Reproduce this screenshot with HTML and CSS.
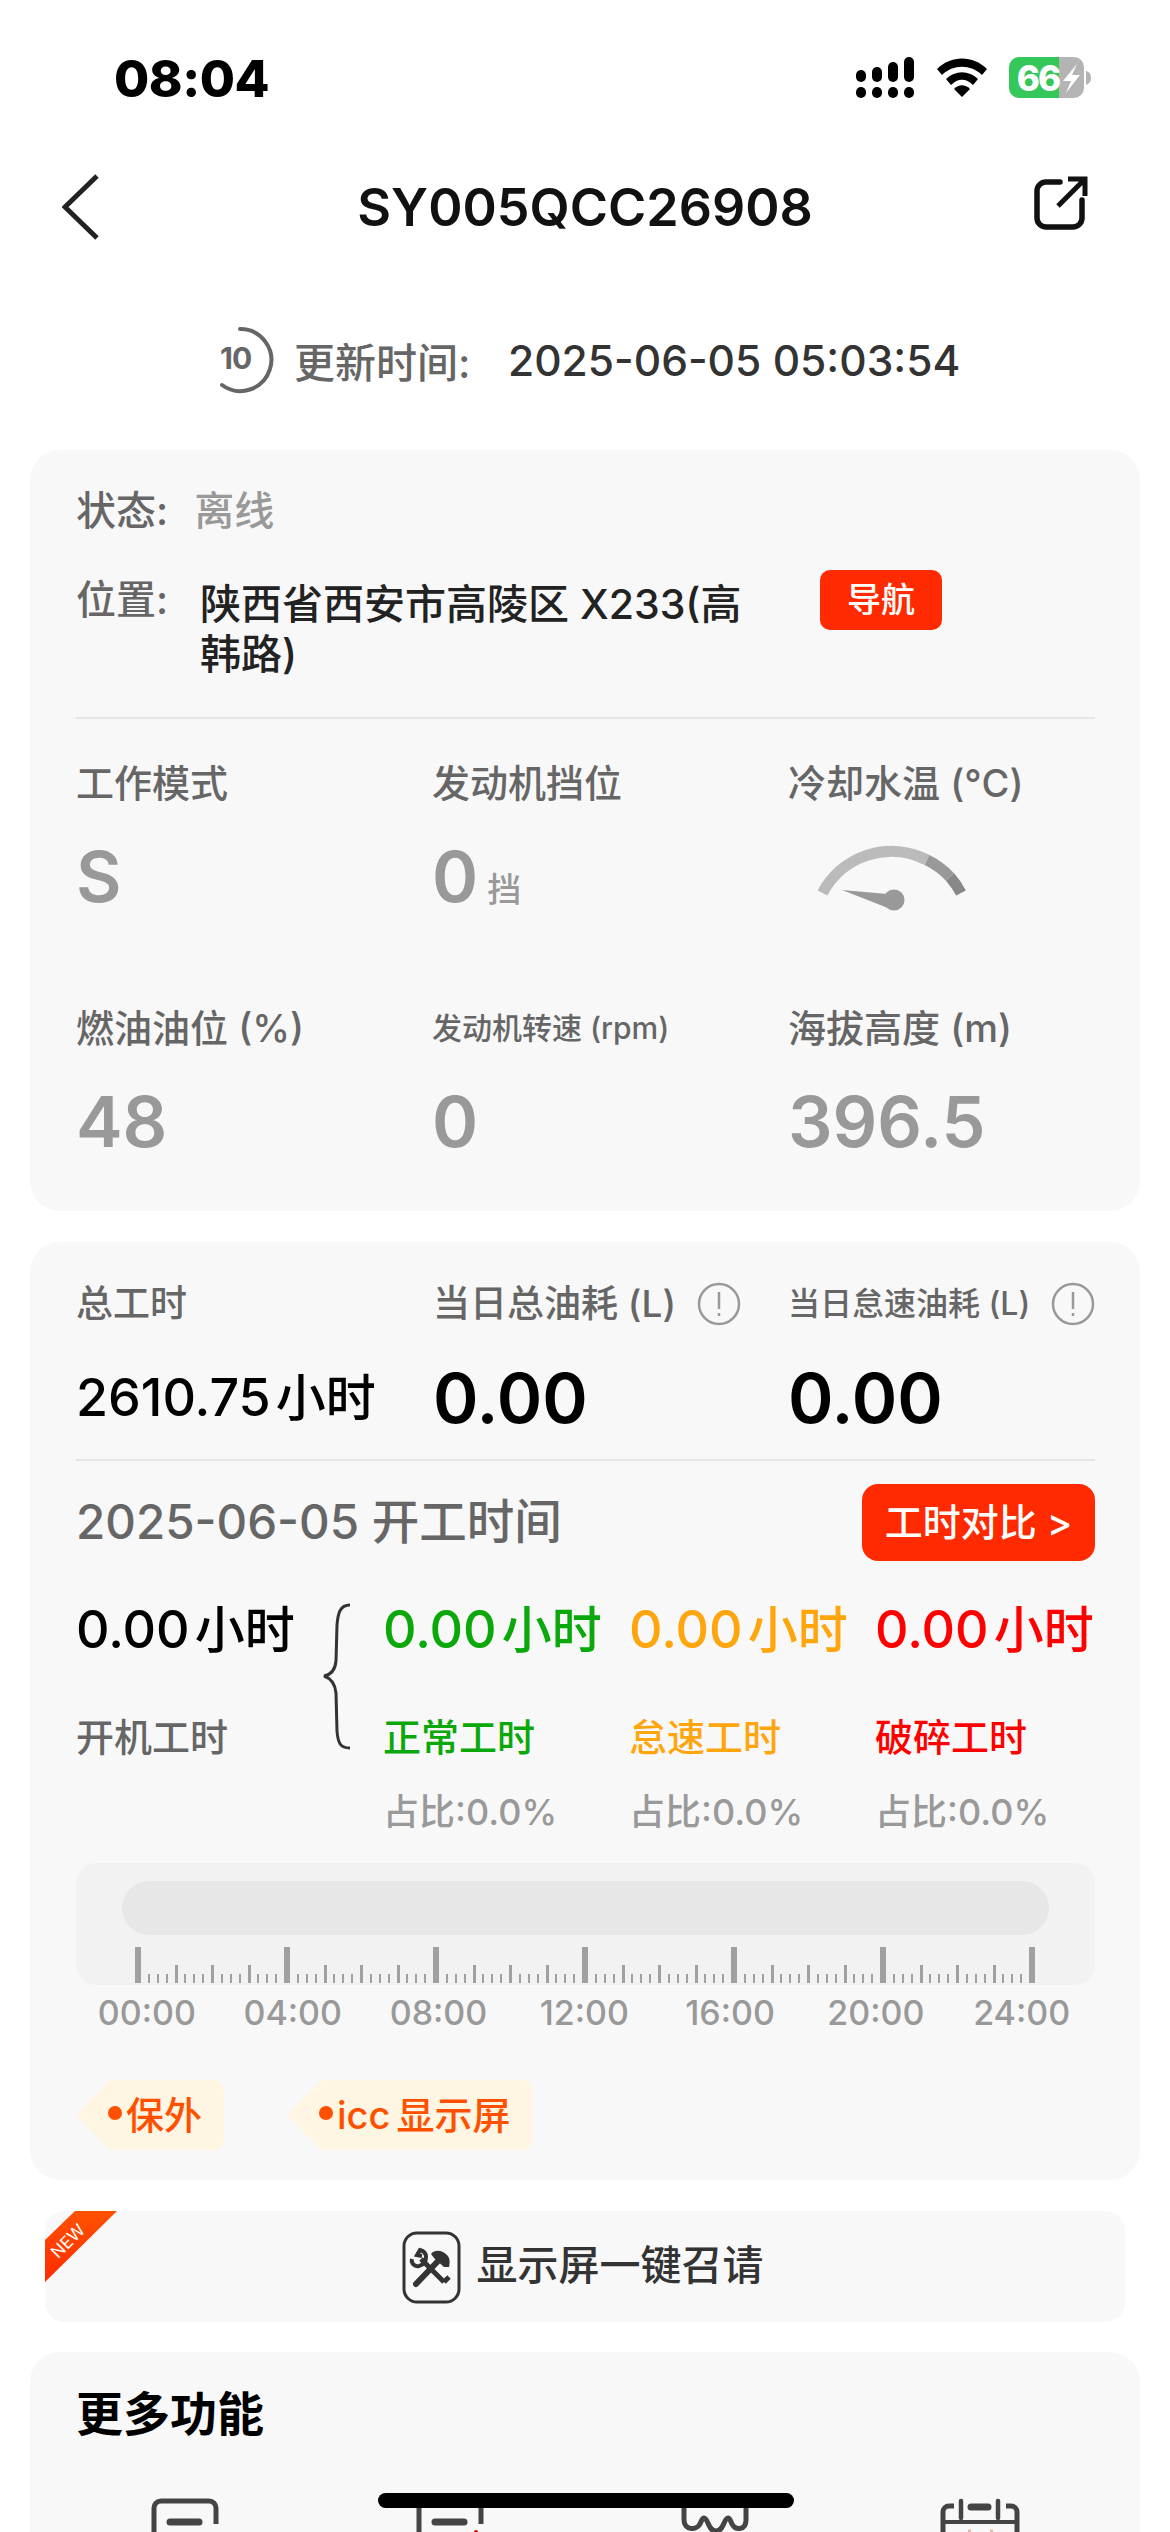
FILE: index.html
```html
<!DOCTYPE html>
<html lang="zh-CN">
<head>
<meta charset="utf-8">
<title>SY005QCC26908</title>
<link rel="stylesheet" href="styles.css">
</head>
<body>
<div class="status">
  <div class="clock">08:04</div>
  <svg class="status-icons" width="235" height="61" viewBox="856 47 235 61">
    <g fill="#000">
      <rect x="856" y="70" width="10" height="12" rx="5"/><rect x="872" y="67" width="10" height="15" rx="5"/><rect x="888" y="62" width="10" height="20" rx="5"/><rect x="904" y="57" width="10" height="25" rx="5"/>
      <rect x="856" y="87" width="10" height="11" rx="5"/><rect x="872" y="87" width="10" height="11" rx="5"/><rect x="888" y="87" width="10" height="11" rx="5"/><rect x="904" y="87" width="10" height="11" rx="5"/>
      <path d="M937 69 C951 55 973 55 987 69 L982 75 C971 64 953 64 942 75 Z"/>
      <path d="M946 79 C955 70 969 70 978 79 L973 85 C966 78 958 78 951 85 Z"/>
      <path d="M954 89 C959 84 965 84 970 89 L962 97 Z"/>
    </g>
    <path d="M1019 57 H1059 V98 H1019 A10 10 0 0 1 1009 88 V67 A10 10 0 0 1 1019 57 Z" fill="#34c759"/>
    <path d="M1059 57 H1074 A10 10 0 0 1 1084 67 V88 A10 10 0 0 1 1074 98 H1059 Z" fill="#b4b4b4"/>
    <path d="M1086 71 C1090 72 1091 75 1091 78 C1091 81 1090 83 1086 85 Z" fill="#b4b4b4"/>
    <text x="1038" y="91" class="batt-num">66</text>
    <path d="M1077 64 L1063 81 H1071 L1066 93 L1080 75 H1072 Z" fill="#fff"/>
  </svg>
</div>

<div class="nav">
  <svg class="back" width="38" height="66" viewBox="0 0 38 66"><path d="M35 2 L3 33 L35 64" fill="none" stroke="#222" stroke-width="5"/></svg>
  <h1 class="nav-title">SY005QCC26908</h1>
  <svg class="share" width="54" height="54" viewBox="0 0 54 54"><path d="M26 6 H12 A9 9 0 0 0 3 15 V42 A9 9 0 0 0 12 51 H39 A9 9 0 0 0 48 42 V24" fill="none" stroke="#111" stroke-width="5.5" stroke-linecap="round"/><path d="M24 30 L50 4 M34 3 H51 V20" fill="none" stroke="#111" stroke-width="5"/></svg>
</div>

<div class="update">
  <svg class="refresh" width="60" height="70" viewBox="0 0 60 70">
    <path d="M24 4 A31 31 0 1 1 6 60" fill="none" stroke="#666" stroke-width="4" stroke-linecap="round"/>
    <text x="4" y="44" class="refresh-num">10</text>
  </svg>
  <span class="update-label">更新时间:</span>
  <span class="update-time">2025-06-05 05:03:54</span>
</div>

<section class="card info-card">
  <div class="state-row"><span class="label label-40">状态:</span><span class="state-val">离线</span></div>
  <div class="loc-row">
    <span class="label label-40 loc-label">位置:</span>
    <span class="loc-val">陕西省西安市高陵区 X233(高<br>韩路)</span>
    <span class="nav-btn">导航</span>
  </div>
  <div class="rule"></div>
  <div class="metrics">
    <div class="metric"><div class="label">工作模式</div><div class="big">S</div></div>
    <div class="metric"><div class="label">发动机挡位</div><div class="big">0<span class="gear">挡</span></div></div>
    <div class="metric"><div class="label">冷却水温 (°C)</div>
      <div class="big">
        <svg class="gauge" width="153" height="72" viewBox="815 845 153 72">
          <path d="M822.5 893 A77.7 77.7 0 0 1 927 860" fill="none" stroke="#bbb" stroke-width="11"/>
          <path d="M927 860 A77.7 77.7 0 0 1 950 877" fill="none" stroke="#999" stroke-width="11"/>
          <path d="M950 877 A77.7 77.7 0 0 1 961 893" fill="none" stroke="#888" stroke-width="11"/>
          <path d="M842 890 L888 894 L888 908 Z" fill="#999"/>
          <circle cx="894" cy="900" r="10.5" fill="#999"/>
        </svg>
      </div>
    </div>
    <div class="metric"><div class="label">燃油油位 (%)</div><div class="big">48</div></div>
    <div class="metric"><div class="label label-small">发动机转速 (rpm)</div><div class="big">0</div></div>
    <div class="metric"><div class="label">海拔高度 (m)</div><div class="big">396.5</div></div>
  </div>
</section>

<section class="card hours-card">
  <div class="totals">
    <div class="total">
      <div class="label label-37">总工时</div>
      <div class="total-val">2610.75<span class="unit">小时</span></div>
    </div>
    <div class="total">
      <div class="label label-37 with-info">当日总油耗 (L)
        <svg class="info" width="44" height="44" viewBox="0 0 44 44"><circle cx="22" cy="22" r="20" fill="none" stroke="#999" stroke-width="2.5"/><path d="M22 10 V27 M22 31 V34" stroke="#999" stroke-width="2.5" fill="none"/></svg>
      </div>
      <div class="fuel-val">0.00</div>
    </div>
    <div class="total">
      <div class="label label-32 with-info">当日怠速油耗 (L)
        <svg class="info" width="44" height="44" viewBox="0 0 44 44"><circle cx="22" cy="22" r="20" fill="none" stroke="#999" stroke-width="2.5"/><path d="M22 10 V27 M22 31 V34" stroke="#999" stroke-width="2.5" fill="none"/></svg>
      </div>
      <div class="fuel-val">0.00</div>
    </div>
  </div>
  <div class="rule rule-tight"></div>
  <div class="date-row">
    <span class="date-text">2025-06-05 开工时间</span>
    <span class="compare-btn">工时对比 &gt;</span>
  </div>
  <div class="split">
    <div class="split-total">
      <div class="hours-val">0.00<span class="unit">小时</span></div>
      <div class="hours-name">开机工时</div>
    </div>
    <svg class="brace" width="30" height="148" viewBox="0 0 30 148"><path d="M28 2 C18 2 16 10 15 22 L14 58 C13 68 8 72 2 73 C8 75 13 80 14 90 L15 128 C16 140 18 145 28 145" fill="none" stroke="#333" stroke-width="3"/></svg>
    <div class="part part-normal">
      <div class="hours-val">0.00<span class="unit">小时</span></div>
      <div class="hours-name">正常工时</div>
      <div class="ratio">占比:0.0%</div>
    </div>
    <div class="part part-idle">
      <div class="hours-val">0.00<span class="unit">小时</span></div>
      <div class="hours-name">怠速工时</div>
      <div class="ratio">占比:0.0%</div>
    </div>
    <div class="part part-break">
      <div class="hours-val">0.00<span class="unit">小时</span></div>
      <div class="hours-name">破碎工时</div>
      <div class="ratio">占比:0.0%</div>
    </div>
  </div>
  <div class="timeline">
    <div class="track"></div>
    <div class="ticks">
      <i></i><i></i><i></i><i></i><i></i><i></i><i></i><i></i><i></i><i></i><i></i><i></i><i></i><i></i><i></i><i></i>
      <i></i><i></i><i></i><i></i><i></i><i></i><i></i><i></i><i></i><i></i><i></i><i></i><i></i><i></i><i></i><i></i>
      <i></i><i></i><i></i><i></i><i></i><i></i><i></i><i></i><i></i><i></i><i></i><i></i><i></i><i></i><i></i><i></i>
      <i></i><i></i><i></i><i></i><i></i><i></i><i></i><i></i><i></i><i></i><i></i><i></i><i></i><i></i><i></i><i></i>
      <i></i><i></i><i></i><i></i><i></i><i></i><i></i><i></i><i></i><i></i><i></i><i></i><i></i><i></i><i></i><i></i>
      <i></i><i></i><i></i><i></i><i></i><i></i><i></i><i></i><i></i><i></i><i></i><i></i><i></i><i></i><i></i><i></i>
      <i></i>
    </div>
  </div>
  <div class="times"><span>00:00</span><span>04:00</span><span>08:00</span><span>12:00</span><span>16:00</span><span>20:00</span><span>24:00</span></div>
  <div class="tags">
    <span class="tag tag-a">保外</span>
    <span class="tag tag-b">icc 显示屏</span>
  </div>
</section>

<div class="recall">
  <span class="ribbon"><span class="ribbon-text">NEW</span></span>
  <svg class="recall-icon" width="60" height="73" viewBox="0 0 60 73">
    <rect x="2" y="2" width="55" height="69" rx="13" fill="none" stroke="#333" stroke-width="3"/>
    <path d="M14 53 L38 28" stroke="#333" stroke-width="6" stroke-linecap="round"/>
    <path d="M29 23 C33 18 40 19 45 24 C48 27 48 31 47 36 L42 36 L32 27 Z" fill="#333"/>
    <path d="M19 28 L42 51" stroke="#333" stroke-width="5"/>
    <path d="M42 51 L47 46" stroke="#333" stroke-width="5"/>
    <path d="M10 28 C9 32 12 36 17 35 C21 34 24 31 24 26 C24 22 22 20 18 19 L15 24 L20 25" fill="none" stroke="#333" stroke-width="4"/>
  </svg>
  <span class="recall-text">显示屏一键召请</span>
</div>

<section class="card more-card">
  <h2 class="more-title">更多功能</h2>
  <div class="more-grid">
    <svg width="70" height="70" viewBox="0 0 70 70"><path d="M4 68 V10 A7 7 0 0 1 11 3 H59 A7 7 0 0 1 66 10 V26" fill="none" stroke="#444" stroke-width="5"/><path d="M20 24 H49" stroke="#444" stroke-width="7" stroke-linecap="round"/></svg>
    <svg width="70" height="70" viewBox="0 0 70 70"><path d="M4 68 V10 A7 7 0 0 1 11 3 H59 A7 7 0 0 1 66 10 V26" fill="none" stroke="#444" stroke-width="5"/><path d="M20 24 H49" stroke="#444" stroke-width="7" stroke-linecap="round"/><circle cx="61" cy="34" r="2" fill="#e00"/></svg>
    <svg width="70" height="70" viewBox="0 0 70 70"><path d="M4 2 V22 C4 32 16 33 20 26 C22 22 22 20 24 20 C28 20 28 33 36 33 C44 33 44 20 48 20 C50 20 50 22 52 26 C56 33 66 32 66 22 V2" fill="none" stroke="#444" stroke-width="5"/></svg>
    <svg width="80" height="70" viewBox="0 0 80 70"><path d="M3 70 V14 A6 6 0 0 1 9 8 H14 M66 8 H71 A6 6 0 0 1 77 14 V70" fill="none" stroke="#444" stroke-width="5"/><path d="M21 3 V20 M58 3 V20" stroke="#444" stroke-width="4.5" stroke-linecap="round"/><path d="M31 9 H48" stroke="#444" stroke-width="7" stroke-linecap="round"/><path d="M3 24 H77" stroke="#444" stroke-width="4"/><path d="M28 33 H31 M50 33 H53" stroke="#e8b9a8" stroke-width="3"/></svg>
  </div>
</section>

<div class="home-bar"></div>
</body>
</html>
```
FILE: styles.css
```css
* { box-sizing: border-box; }
html, body { margin: 0; padding: 0; }
body {
  position: relative;
  width: 1170px;
  height: 2532px;
  overflow: hidden;
  background: #fff;
  font-family: Inter, "Noto Sans CJK SC", sans-serif;
  color: #333;
}
h1, h2 { margin: 0; }

.status {
  height: 156px;
  padding: 0 79px 0 114px;
  display: flex;
  align-items: center;
  justify-content: space-between;
}
.clock { font-size: 51px; font-weight: 800; color: #000; letter-spacing: -0.5px; }
.status-icons { display: block; margin-top: -1px; }
.batt-num { font: 800 35px Inter, sans-serif; fill: #fff; text-anchor: middle; letter-spacing: -2px; }

.nav {
  height: 102px;
  padding: 0 62px;
  display: grid;
  grid-template-columns: 1fr auto 1fr;
  align-items: center;
}
.nav-title { font-size: 52px; font-weight: 600; color: #111; }
.share { justify-self: end; margin: -8px 20px 0 0; }

.update {
  height: 72px;
  margin-top: 66px;
  padding-left: 216px;
  display: flex;
  align-items: center;
}
.refresh { margin-right: 18px; flex: none; }
.refresh-num { font: 700 30px Inter, sans-serif; fill: #666; letter-spacing: -1px; }
.update-label { font-size: 41px; font-weight: 500; color: #666; width: 214px; flex: none; }
.update-time { font-size: 42.5px; font-weight: 500; color: #333; white-space: nowrap; }

.card {
  width: 1110px;
  margin: 0 30px;
  background: #f8f8f8;
  border-radius: 30px;
  padding: 0 45px 0 46px;
}
.info-card { margin-top: 54px; padding-top: 36px; padding-bottom: 49px; }
.hours-card { margin-top: 31px; padding-top: 37px; padding-bottom: 30px; }
.label { font-size: 38px; line-height: 50px; font-weight: 500; color: #666; white-space: nowrap; }
.label-small { font-size: 30px; }
.label-37 { font-size: 37px; }
.label-40 { font-size: 40px; }
.label-32 { font-size: 32px; }

.state-row { display: flex; gap: 26px; }
.state-val { font-size: 40px; line-height: 50px; font-weight: 500; color: #999; }
.loc-row { display: flex; margin-top: 34px; }
.loc-label { width: 124px; margin-top: 5px; flex: none; }
.loc-val { width: 620px; flex: none; margin-top: 9px; font-size: 41px; line-height: 50px; font-weight: 500; color: #222; white-space: nowrap; }
.nav-btn {
  width: 122px;
  height: 60px;
  background: #ff2a00;
  color: #fff;
  border-radius: 10px;
  font-size: 34px;
  line-height: 60px;
  font-weight: 500;
  text-align: center;
}
.rule { height: 2px; background: #e6e6e6; margin-top: 38px; }
.rule-tight { margin-top: 16px; }

.metrics {
  display: grid;
  grid-template-columns: repeat(3, 356px);
  row-gap: 86px;
  margin-top: 39px;
  margin-right: -48px;
}
.big {
  height: 80px;
  margin-top: 29px;
  font-size: 70px;
  line-height: 80px;
  font-weight: 600;
  color: #999;
  display: flex;
  align-items: baseline;
}
.gear { font-size: 34px; font-weight: 500; margin-left: 9px; }
.gauge { align-self: flex-start; margin: 8px 0 0 27px; }

.totals { display: grid; grid-template-columns: 357px 355px 308px; }
.with-info { display: flex; align-items: center; gap: 21px; }
.info { flex: none; }
.total-val { font-size: 52px; line-height: 90px; margin-top: 24px; font-weight: 500; color: #000; white-space: nowrap; }
.unit { font-size: 50px; margin-left: 5px; }
.fuel-val { font-size: 69px; line-height: 90px; margin-top: 24px; font-weight: 600; color: #000; }

.date-row { display: flex; justify-content: space-between; align-items: center; margin-top: 23px; }
.date-text { font-size: 47.5px; line-height: 70px; margin-top: -2px; font-weight: 500; color: #666; white-space: nowrap; }
.compare-btn {
  width: 233px;
  height: 77px;
  background: #ff2a00;
  color: #fff;
  border-radius: 16px;
  font-size: 38px;
  line-height: 77px;
  font-weight: 500;
  text-align: center;
}

.split { display: flex; margin-top: 37px; position: relative; }
.split-total { width: 246px; flex: none; }
.brace { flex: none; margin: 5px 31px 0 0; }
.part { flex: none; width: 246px; }
.part-break { width: 220px; }
.hours-val { font-size: 52px; line-height: 64px; font-weight: 500; color: #000; white-space: nowrap; }
.hours-name { font-size: 38px; line-height: 50px; font-weight: 500; margin-top: 50px; color: #666; }
.ratio { font-size: 36px; line-height: 50px; font-weight: 500; margin-top: 25px; color: #999; }
.part-normal .hours-val, .part-normal .hours-name { color: #0aa80a; }
.part-idle .hours-val, .part-idle .hours-name { color: #ffa50d; }
.part-break .hours-val, .part-break .hours-name { color: #ff0000; }

.timeline { height: 122px; margin-top: 26px; background: #f2f2f2; border-radius: 20px; overflow: hidden; }
.track { height: 54px; margin: 18px 46px 12px; background: #e7e7e7; border-radius: 27px; }
.ticks { height: 36px; padding: 0 59px; display: flex; justify-content: space-between; align-items: flex-end; }
.ticks i { display: block; width: 2px; height: 9px; background: #a0a0a0; }
.ticks i:nth-child(4n+1) { width: 3px; height: 18px; }
.ticks i:nth-child(16n+1) { width: 6px; height: 36px; }

.times {
  display: grid;
  grid-template-columns: repeat(7, 145.8px);
  justify-items: center;
  margin: 6px 0 0 -2px;
  font-size: 34px;
  line-height: 44px;
  font-weight: 500;
  color: #999;
}

.tags { display: flex; gap: 63px; margin-top: 45px; }
.tag {
  position: relative;
  height: 70px;
  padding: 0 22px 5px 50px;
  display: flex;
  align-items: center;
  background: #fff5e3;
  color: #ff5000;
  font-size: 38px;
  font-weight: 500;
  word-spacing: -4px;
  border-radius: 0 10px 10px 0;
  clip-path: polygon(0 50%, 34px 0, 100% 0, 100% 100%, 34px 100%);
}
.tag::before {
  content: "";
  position: absolute;
  left: 32px;
  top: 26px;
  width: 14px;
  height: 14px;
  border-radius: 50%;
  background: #ff5000;
}

.recall {
  position: relative;
  width: 1080px;
  height: 111px;
  margin: 31px 0 0 45px;
  padding-right: 5px;
  background: #f8f8f8;
  border-radius: 20px;
  overflow: hidden;
  display: flex;
  align-items: center;
  justify-content: center;
  gap: 15px;
}
.ribbon {
  position: absolute;
  left: 0;
  top: 0;
  width: 72px;
  height: 71px;
  background: linear-gradient(#ff5200, #ff2a00);
  clip-path: polygon(30px 0, 72px 0, 0 71px, 0 29px);
}
.ribbon-text {
  position: absolute;
  left: 3px;
  top: 20px;
  font-size: 17px;
  line-height: 20px;
  color: #fff;
  transform: rotate(-45deg);
}
.recall-icon { flex: none; margin-top: 1px; }
.recall-text { font-size: 41px; line-height: 50px; font-weight: 500; color: #333; white-space: nowrap; margin-top: -3px; }

.more-card { margin-top: 30px; padding: 33px 0 40px; }
.more-title { font-size: 47px; line-height: 60px; margin-top: -1px; margin-bottom: 1px; font-weight: 700; color: #000; padding-left: 46px; }
.more-grid {
  display: grid;
  grid-template-columns: repeat(4, 265px);
  justify-items: center;
  margin: 54px 0 0 22px;
}

.home-bar {
  position: absolute;
  left: 378px;
  top: 2493px;
  width: 416px;
  height: 15px;
  border-radius: 8px;
  background: #000;
}
```
